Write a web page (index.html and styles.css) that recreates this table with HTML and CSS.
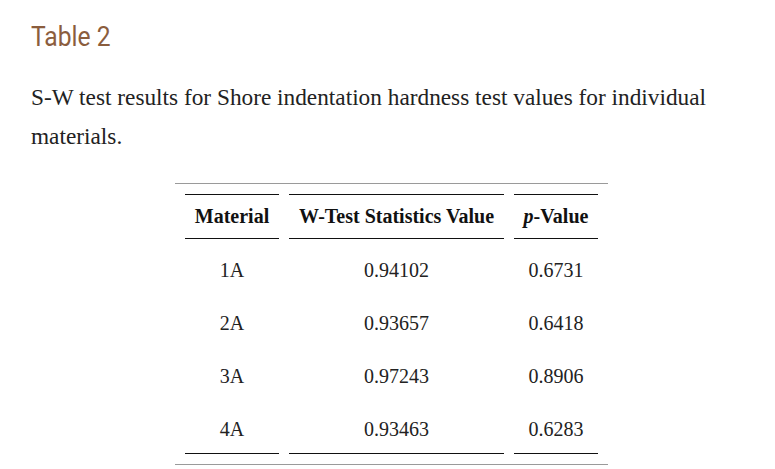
FILE: index.html
```html
<!DOCTYPE html>
<html>
<head>
<meta charset="utf-8">
<link rel="stylesheet" href="styles.css">
</head>
<body>
<main class="page">
  <h2 class="title"><span class="title-text">Table 2</span></h2>
  <p class="caption">S-W test results for Shore indentation hardness test values for individual materials.</p>
  <table class="data">
    <thead>
      <tr>
        <th class="c1">Material</th>
        <th class="c2">W-Test Statistics Value</th>
        <th class="c3"><em>p</em>-Value</th>
      </tr>
    </thead>
    <tbody>
      <tr><td>1A</td><td>0.94102</td><td>0.6731</td></tr>
      <tr><td>2A</td><td>0.93657</td><td>0.6418</td></tr>
      <tr><td>3A</td><td>0.97243</td><td>0.8906</td></tr>
      <tr class="last"><td>4A</td><td>0.93463</td><td>0.6283</td></tr>
    </tbody>
  </table>
</main>
</body>
</html>
```

FILE: styles.css
```css
html, body {
  margin: 0;
  padding: 0;
  background: #ffffff;
}

.page {
  padding: 23px 31px 0 31px;
}

.title {
  margin: 0;
  font-family: Roboto, "Liberation Sans", sans-serif;
  font-weight: normal;
  font-size: 28px;
  line-height: 28px;
  color: #8b5d3d;
}

.title-text {
  display: inline-block;
  transform: scaleX(0.88);
  transform-origin: left center;
}

.caption {
  margin: 27px 0 0 0;
  font-family: "Liberation Serif", serif;
  font-size: 23.3px;
  line-height: 39px;
  color: #222222;
}

.data {
  margin: 27px 0 0 144px;
  border-collapse: separate;
  border-spacing: 10px;
  border-top: 1px solid #9a9a9a;
  border-bottom: 1px solid #9a9a9a;
  font-family: "Liberation Serif", serif;
  font-size: 20px;
  line-height: 23px;
  color: #222222;
}

.data th,
.data td {
  padding: 10px 9px;
  text-align: center;
  white-space: nowrap;
}

.data th {
  font-weight: bold;
  color: #111111;
  border-top: 1px solid #111111;
  border-bottom: 1px solid #111111;
}

.data th em {
  font-style: italic;
}

.data .c1 { width: 76px; }
.data .c2 { width: 197px; }
.data .c3 { width: 66px; }

.data tr.last td {
  padding-bottom: 12px;
  border-bottom: 1px solid #111111;
}
```
